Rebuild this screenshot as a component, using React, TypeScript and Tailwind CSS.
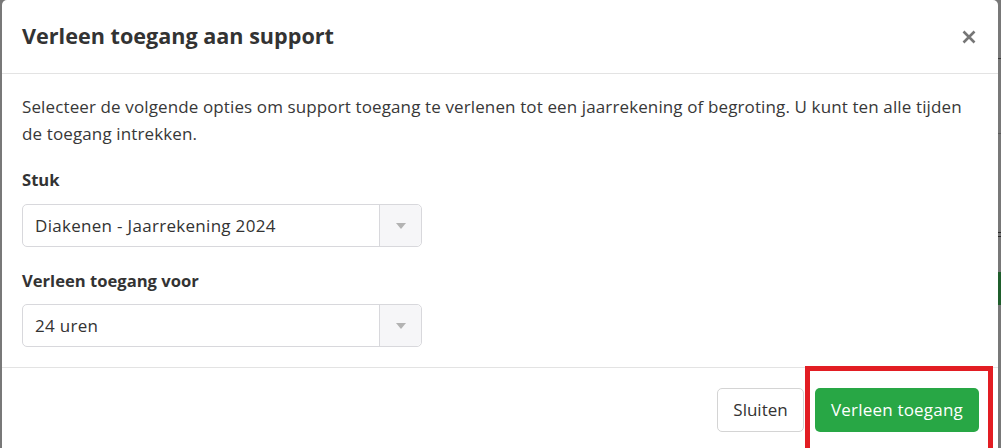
import React from "react";

function Caret() {
  return (
    <svg width="10" height="6" viewBox="0 0 10 6" className="block">
      <path d="M0 0 L10 0 L5 6 Z" fill="#b3b3b3" />
    </svg>
  );
}

function SelectBox({ value }: { value: string }) {
  return (
    <div className="flex h-[43px] w-[400px] items-stretch rounded-[5px] border border-[#d8d8dc] bg-white">
      <div className="flex flex-1 items-center pl-[12px] text-[17px] tracking-[0.3px] text-[#333]">{value}</div>
      <div className="flex w-[42px] items-center justify-center rounded-r-[5px] border-l border-[#d8d8dc] bg-[#f6f6f8]">
        <Caret />
      </div>
    </div>
  );
}

export default function App() {
  return (
    <div
      className="flex h-[448px] w-[1001px] overflow-hidden bg-[#787878]"
      style={{ fontFamily: "'Open Sans', 'Noto Sans', sans-serif" }}
    >
      <div className="w-[2px] shrink-0" />
      <div className="relative h-[470px] w-[996px] shrink-0 rounded-[5px] bg-white">
        <div className="flex h-[74px] items-center justify-between border-b border-[#e3e3e3] pl-[20px] pr-[21px]">
          <h1 className="text-[21.6px] font-bold text-[#333]">Verleen toegang aan support</h1>
          <svg width="14" height="14" viewBox="0 0 14 14" className="mr-[1px]">
            <path d="M1.5 1.5 L12.5 12.5 M12.5 1.5 L1.5 12.5" stroke="#767676" strokeWidth="2.6" strokeLinecap="butt" />
          </svg>
        </div>
        <div className="px-[20px] pb-[20px] pt-[19px]">
          <p className="text-[17px] leading-[27px] tracking-[0.12px] text-[#383838]">
            Selecteer de volgende opties om support toegang te verlenen tot een jaarrekening of begroting. U kunt ten alle tijden de toegang intrekken.
          </p>
          <div className="mt-[21px] text-[16.6px] font-bold leading-[24px] text-[#333]">Stuk</div>
          <div className="mt-[12px]">
            <SelectBox value="Diakenen - Jaarrekening 2024" />
          </div>
          <div className="mt-[22px] text-[16.6px] font-bold leading-[24px] text-[#333]">Verleen toegang voor</div>
          <div className="mt-[11px]">
            <SelectBox value="24 uren" />
          </div>
        </div>
        <div className="flex justify-end gap-[11px] border-t border-[#e3e3e3] pr-[19px] pt-[20px]">
          <button className="h-[44px] w-[87px] rounded-[5px] border border-[#d4d4d4] bg-white text-[17px] text-[#333]">
            Sluiten
          </button>
          <button className="h-[44px] w-[164px] rounded-[5px] bg-[#28a745] text-[17px] tracking-[0.2px] text-white">
            Verleen toegang
          </button>
        </div>
        <div className="absolute left-[803px] top-[366px] h-[90px] w-[188px] border-[5px] border-[#e21d23]" />
      </div>
      <div className="flex w-[3px] shrink-0 flex-col">
        <div className="h-[58px]" />
        <div className="h-[1px] bg-[#3a3a3a]" />
        <div className="h-[74px]" />
        <div className="h-[1px] bg-[#5a5a5a]" />
        <div className="h-[98px]" />
        <div className="h-[1px] bg-[#2a2a2a]" />
        <div className="h-[3px]" />
        <div className="h-[1px] bg-[#2a2a2a]" />
        <div className="h-[35px]" />
        <div className="h-[33px] bg-[#1f5e2c]" />
      </div>
    </div>
  );
}
